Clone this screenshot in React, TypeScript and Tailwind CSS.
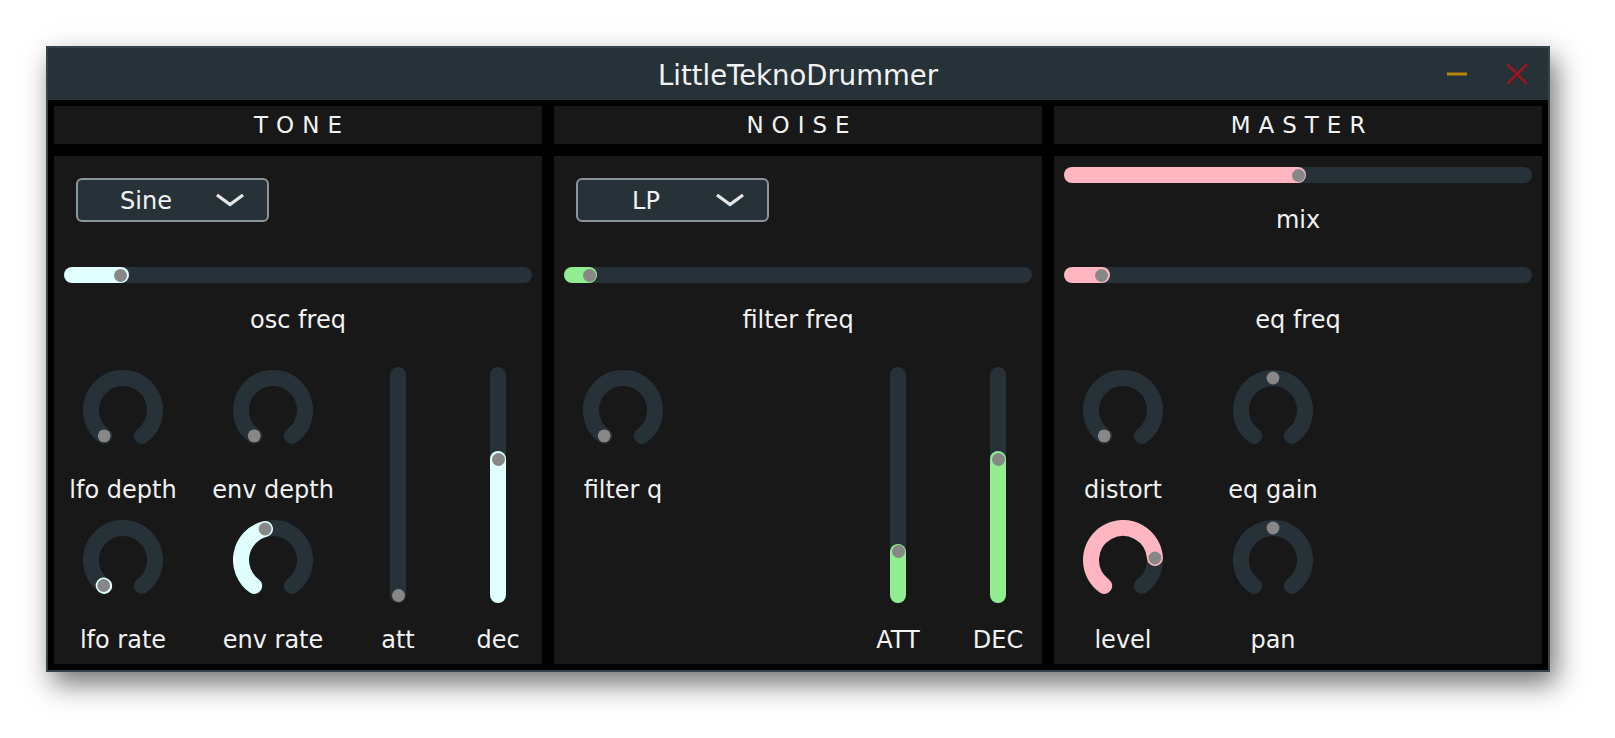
import React from "react";

const TRACK = "#263238";

const polar = (a: number, r = 32) => {
  const rad = (a * Math.PI) / 180;
  return [40 + r * Math.sin(rad), 40 - r * Math.cos(rad)];
};

const arc = (from: number, to: number) => {
  const [x1, y1] = polar(from);
  const [x2, y2] = polar(to);
  const large = to - from > 180 ? 1 : 0;
  return `M ${x1} ${y1} A 32 32 0 ${large} 1 ${x2} ${y2}`;
};

type KnobProps = { value: number; color: string; label: string; bipolar?: boolean };

const Knob: React.FC<KnobProps> = ({ value, color, label, bipolar }) => {
  const a = -144 + value * 288;
  const [tx, ty] = polar(a);
  return (
    <div className="flex flex-col items-center">
      <svg width="80" height="80" viewBox="0 0 80 80">
        <path d={arc(-144, 144)} stroke={TRACK} strokeWidth={16} fill="none" strokeLinecap="round" />
        {value > 0 && !bipolar && (
          <path d={arc(-144, a)} stroke={color} strokeWidth={16} fill="none" strokeLinecap="round" />
        )}
        <circle cx={tx} cy={ty} r={6.4} fill="#878787" />
      </svg>
      <span className="mt-[26px] whitespace-nowrap leading-[28px]">{label}</span>
    </div>
  );
};

type SliderProps = { value: number; fill: string; label: string };

const HSlider: React.FC<SliderProps> = ({ value, fill, label }) => (
  <div className="flex flex-col items-center px-[10px]">
    <div className="flex h-[16px] w-full rounded-full bg-[#263238]">
      <div
        className={`flex h-full items-center justify-end rounded-full pr-[1.5px] ${fill}`}
        style={{ width: 16 + value * 452 }}
      >
        <div className="h-[13px] w-[13px] rounded-full bg-[#878787]" />
      </div>
    </div>
    <span className="mt-[23px] leading-[28px]">{label}</span>
  </div>
);

const VSlider: React.FC<SliderProps> = ({ value, fill, label }) => (
  <div className="flex w-[80px] flex-col items-center">
    <div className="flex h-[236px] w-[16px] flex-col justify-end rounded-full bg-[#263238]">
      <div
        className={`flex w-full flex-col items-center rounded-full pt-[1.5px] ${value > 0 ? fill : ""}`}
        style={{ height: 16 + value * 220 }}
      >
        <div className="h-[13px] w-[13px] rounded-full bg-[#878787]" />
      </div>
    </div>
    <span className="mt-[23px] leading-[28px]">{label}</span>
  </div>
);

const Dropdown = ({ text }: { text: string }) => (
  <div className="ml-[22px] mt-[11px] flex h-[44px] w-[193px] items-center rounded-[6px] border-2 border-[#8a969c] bg-[#263238]">
    <span className="w-[136px] pt-[1px] text-center leading-[28px]">{text}</span>
    <svg width="30" height="14" viewBox="0 0 30 14" className="ml-[1px]">
      <polyline points="2,2 15,11.5 28,2" fill="none" stroke="#e6e6e6" strokeWidth={3.4} />
    </svg>
  </div>
);

const Header = ({ title }: { title: string }) => (
  <div className="flex h-[38px] items-center justify-center bg-[#181818] pl-[8px] text-[23px] tracking-[8px]">
    {title}
  </div>
);

const Column = ({ title, children }: { title: string; children: React.ReactNode }) => (
  <div className="flex w-[488px] flex-col gap-[12px]">
    <Header title={title} />
    <div className="flex h-[508px] flex-col bg-[#181818] pt-[11px]">{children}</div>
  </div>
);

const KnobGrid = ({ children }: { children: React.ReactNode }) => (
  <div className="ml-[14px] mt-[3px] grid grid-cols-[110px_110px] gap-x-[40px] gap-y-[16px] self-start">
    {children}
  </div>
);

export default function App() {
  return (
    <div className="min-h-screen bg-white pl-[46px] pt-[46px] font-['DejaVu_Sans',sans-serif] text-[24px] text-[#f2f2f2]">
      <div className="w-[1504px] border-2 border-[#36434b] bg-black shadow-[6px_12px_26px_rgba(0,0,0,0.55)]">
        <div className="grid h-[52px] grid-cols-[1fr_auto_1fr] items-center bg-[#263238]">
          <div />
          <div className="pt-[4px] text-[27.5px]">LittleTeknoDrummer</div>
          <div className="flex items-center justify-end gap-[40px] pr-[21px]">
            <svg width="20" height="20" viewBox="0 0 20 20">
              <line x1="0" y1="10" x2="20" y2="10" stroke="#b8860b" strokeWidth={3} />
            </svg>
            <svg width="20" height="20" viewBox="0 0 20 20">
              <line x1="0" y1="0" x2="20" y2="20" stroke="#a3141c" strokeWidth={2.4} />
              <line x1="20" y1="0" x2="0" y2="20" stroke="#a3141c" strokeWidth={2.4} />
            </svg>
          </div>
        </div>
        <div className="flex gap-[12px] p-[6px]">
          <Column title="TONE">
            <div className="h-[100px]">
              <Dropdown text="Sine" />
            </div>
            <div className="h-[100px]">
              <HSlider value={0.108} fill="bg-[#e0ffff]" label="osc freq" />
            </div>
            <div className="flex">
              <KnobGrid>
                <Knob value={0} color="#e0ffff" label="lfo depth" />
                <Knob value={0} color="#e0ffff" label="env depth" />
                <Knob value={0.004} color="#e0ffff" label="lfo rate" />
                <Knob value={0.45} color="#e0ffff" label="env rate" />
              </KnobGrid>
              <div className="ml-auto mr-[4px] flex gap-[20px]">
                <VSlider value={0} fill="bg-[#e0ffff]" label="att" />
                <VSlider value={0.618} fill="bg-[#e0ffff]" label="dec" />
              </div>
            </div>
          </Column>
          <Column title="NOISE">
            <div className="h-[100px]">
              <Dropdown text="LP" />
            </div>
            <div className="h-[100px]">
              <HSlider value={0.038} fill="bg-[#90ee90]" label="filter freq" />
            </div>
            <div className="flex">
              <KnobGrid>
                <Knob value={0} color="#90ee90" label="filter q" />
              </KnobGrid>
              <div className="ml-auto mr-[4px] flex gap-[20px]">
                <VSlider value={0.197} fill="bg-[#90ee90]" label="ATT" />
                <VSlider value={0.618} fill="bg-[#90ee90]" label="DEC" />
              </div>
            </div>
          </Column>
          <Column title="MASTER">
            <div className="h-[100px]">
              <HSlider value={0.5} fill="bg-[#ffb6c1]" label="mix" />
            </div>
            <div className="h-[100px]">
              <HSlider value={0.066} fill="bg-[#ffb6c1]" label="eq freq" />
            </div>
            <div className="flex">
              <KnobGrid>
                <Knob value={0} color="#ffb6c1" label="distort" />
                <Knob value={0.5} color="#ffb6c1" label="eq gain" bipolar />
                <Knob value={0.8} color="#ffb6c1" label="level" />
                <Knob value={0.5} color="#ffb6c1" label="pan" bipolar />
              </KnobGrid>
            </div>
          </Column>
        </div>
      </div>
    </div>
  );
}
